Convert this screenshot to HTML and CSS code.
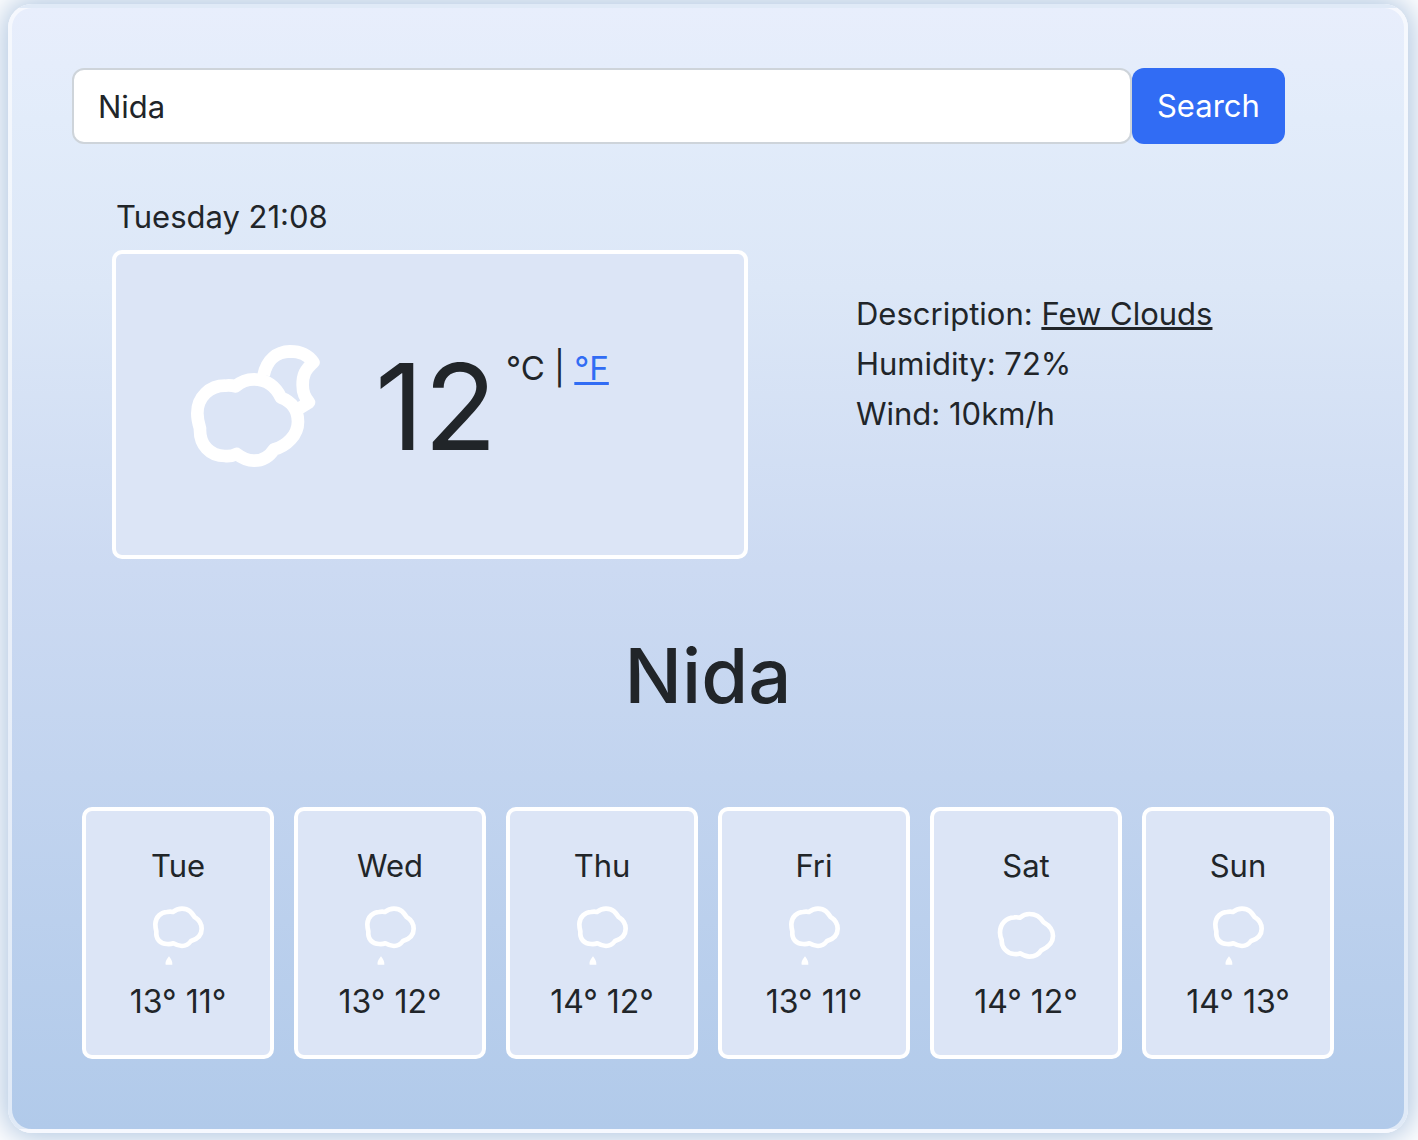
FILE: index.html
```html
<!DOCTYPE html>
<html lang="en">
<head>
<meta charset="utf-8">
<meta name="viewport" content="width=device-width, initial-scale=1">
<title>Weather</title>
<link rel="stylesheet" href="styles.css">
</head>
<body>
<svg class="symbols" aria-hidden="true">
  <symbol id="rain" viewBox="-5 0 300 270">
    <path class="outline" d="M130 66Q142 56 157 56C178 56 186 68 194 80C210 90 216 100 216 116C216 138 200 148 184 153C176 164 168 168 157 168C145 168 138 164 131 160Q122 163 112 162C92 162 78 148 80 124Q77 112 77 102C78 80 95 66 112 66Q122 64 130 66Z"/>
    <path class="drop" d="M118 199C112 208 106 214 108 224H128C129 214 124 208 118 199Z"/>
  </symbol>
  <symbol id="cloud" viewBox="-10 0 300 270">
    <path class="outline" d="M122 83Q135 72 150 72C170 72 184 82 193 97C212 108 221 120 221 138C221 160 206 172 186 181C178 194 165 200 150 200C138 200 130 195 122 190Q114 193 104 192C82 190 66 172 67 150Q62 138 62 128C62 100 82 83 104 82Q114 81 122 83Z"/>
  </symbol>
</svg>
<main class="weather-app">
  <form class="search-form">
    <input class="search-input" type="text" value="Nida" aria-label="City">
    <button class="search-button" type="button">Search</button>
  </form>
  <section class="overview">
    <div class="current">
      <div class="date">Tuesday 21:08</div>
      <div class="current-card">
        <svg class="current-icon" viewBox="0 0 540 510" role="img" aria-label="Few clouds">
          <path d="M197 199Q220 178 252 178C290 178 318 200 333 233C365 245 384 270 384 305C384 345 350 378 312 388C298 410 280 422 252 422C230 422 213 412 200 402Q183 410 165 408C120 408 88 375 90 325Q82 300 82 280C82 230 120 197 165 197Q182 195 197 199Z"/>
          <path d="M281 165C290 120 320 95 360 94C390 94 415 105 430 127C405 150 398 165 398 195C398 220 405 232 417 247L390 264"/>
        </svg>
        <span class="temperature">12</span>
        <span class="units">°C | <a href="#">°F</a></span>
      </div>
    </div>
    <ul class="details">
      <li>Description: <span class="description">Few Clouds</span></li>
      <li>Humidity: 72%</li>
      <li>Wind: 10km/h</li>
    </ul>
  </section>
  <h1 class="city">Nida</h1>
  <section class="forecast">
    <div class="day"><span>Tue</span><svg class="day-icon"><use href="#rain"/></svg><span class="range">13° 11°</span></div>
    <div class="day"><span>Wed</span><svg class="day-icon"><use href="#rain"/></svg><span class="range">13° 12°</span></div>
    <div class="day"><span>Thu</span><svg class="day-icon"><use href="#rain"/></svg><span class="range">14° 12°</span></div>
    <div class="day"><span>Fri</span><svg class="day-icon"><use href="#rain"/></svg><span class="range">13° 11°</span></div>
    <div class="day"><span>Sat</span><svg class="day-icon"><use href="#cloud"/></svg><span class="range">14° 12°</span></div>
    <div class="day"><span>Sun</span><svg class="day-icon"><use href="#rain"/></svg><span class="range">14° 13°</span></div>
  </section>
</main>
</body>
</html>
```
FILE: styles.css
```css
* {
  box-sizing: border-box;
}

body {
  margin: 0;
  padding: 4px 10px 7px 8px;
  background: #fff;
  color: #212529;
  font: 31px/48px Inter, "Liberation Sans", sans-serif;
}

.symbols {
  position: absolute;
  width: 0;
  height: 0;
}

.weather-app {
  padding: 60px 60px 70px;
  border: 4px solid rgba(255, 255, 255, 0.6);
  border-radius: 24px;
  background-image: linear-gradient(#e8eefc, #e2ecfa 10%, #dce7f7 25%, #ccdaf2 50%, #b1caea);
  box-shadow: 0 0 30px 5px #b0c6e0;
}

.search-form {
  display: flex;
}

.search-input {
  width: 83.3333%;
  height: 76px;
  padding: 0 24px;
  border: 2px solid #ced4da;
  border-radius: 12px;
  background: #fff;
  color: inherit;
  font: inherit;
}

.search-button {
  height: 76px;
  padding: 0 25px;
  border: 0;
  border-radius: 12px;
  background: #316cf4;
  color: #fff;
  font: inherit;
}

.overview {
  display: flex;
  margin-top: 49px;
  padding-left: 40px;
}

.current {
  width: 51.6234%;
}

.date {
  padding-left: 4px;
}

.current-card {
  display: flex;
  align-items: flex-start;
  height: 309px;
  margin-top: 9px;
  border: 4px solid #fff;
  border-radius: 10px;
  background: #dce5f6;
}

.current-icon {
  flex: none;
  width: 180px;
  height: 170px;
  margin: 66px 25px 0 54px;
  fill: none;
  stroke: #fff;
  stroke-width: 38;
  stroke-linejoin: round;
}

.temperature {
  margin-top: 78px;
  font-size: 120px;
  line-height: 150px;
}

.units {
  margin: 90px 0 0 9px;
  font-size: 33px;
}

.units a {
  color: #316cf4;
}

.details {
  margin: 96px 0 0 108px;
  padding: 0;
  line-height: 50px;
  list-style: none;
}

.description {
  text-decoration: underline;
}

.city {
  margin: 68px 0 84px;
  font-size: 76px;
  font-weight: 500;
  line-height: 96px;
  text-align: center;
}

.forecast {
  display: grid;
  grid-template-columns: repeat(6, 1fr);
  gap: 20px;
  padding: 0 10px;
}

.day {
  display: flex;
  flex-direction: column;
  align-items: center;
  height: 252px;
  padding-top: 31px;
  border: 4px solid #fff;
  border-radius: 10px;
  background: #dce5f6;
}

.day-icon {
  width: 100px;
  height: 90px;
  margin-bottom: -2px;
  fill: none;
}

.range {
  font-size: 32px;
}

.outline {
  stroke: #fff;
  stroke-width: 14;
  stroke-linejoin: round;
}

.drop {
  fill: #fff;
}
```
